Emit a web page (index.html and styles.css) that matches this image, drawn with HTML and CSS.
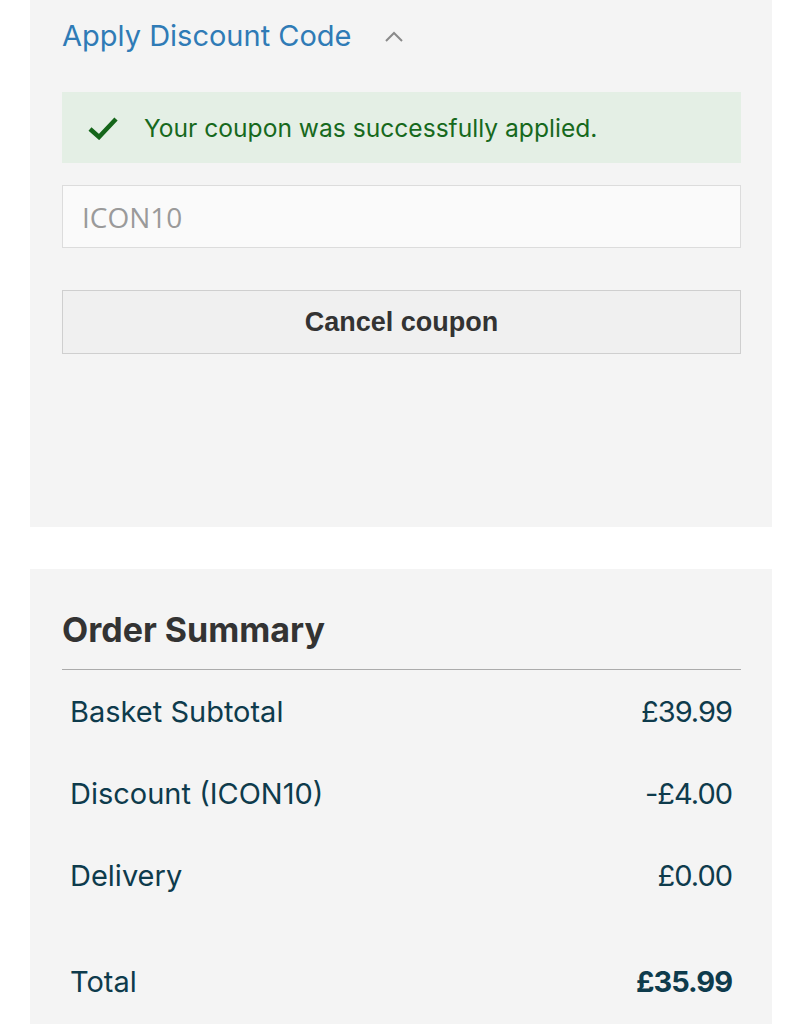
FILE: index.html
```html
<!DOCTYPE html>
<html>
<head>
<meta charset="utf-8">
<link rel="stylesheet" href="styles.css">
</head>
<body>
<div class="page">
  <section class="panel discount">
    <div class="disc-head">
      <span class="disc-title">Apply Discount Code</span>
      <svg class="chev" width="20" height="12" viewBox="0 0 20 12"><path d="M2 11 L10 3 L18 11" fill="none" stroke="#8a8a8a" stroke-width="2"/></svg>
    </div>
    <div class="success">
      <svg class="tick" width="30" height="24" viewBox="0 0 30 24"><path d="M2 13 L11 21 L28 3" fill="none" stroke="#15661a" stroke-width="4.5"/></svg>
      <span>Your coupon was successfully applied.</span>
    </div>
    <div class="code-input">ICON10</div>
    <button class="cancel">Cancel coupon</button>
  </section>
  <section class="panel summary">
    <h2 class="sum-title">Order Summary</h2>
    <div class="rows">
      <div class="row"><span>Basket Subtotal</span><span class="amt">£39.99</span></div>
      <div class="row"><span>Discount (ICON10)</span><span class="amt">-£4.00</span></div>
      <div class="row"><span>Delivery</span><span class="amt">£0.00</span></div>
      <div class="row total"><span>Total</span><span class="amt val">£35.99</span></div>
    </div>
  </section>
</div>
</body>
</html>
```

FILE: styles.css
```css
html, body { margin: 0; padding: 0; background: #fff; }
.page { width: 742px; margin-left: 30px; display: flex; flex-direction: column; gap: 42px; }
.panel { background: #f4f4f4; padding: 0 31px 0 32px; }
.discount { height: 527px; box-sizing: border-box; padding-top: 17px; }
.disc-head { display: flex; align-items: center; gap: 32px; height: 36px; }
.disc-title { font-family: "Inter", "Noto Sans", sans-serif; font-size: 29px; color: #2f7bb6; }
.chev { margin-top: 2px; }
.success { margin-top: 39px; height: 71px; background: #e4efe5; display: flex; align-items: center; padding-left: 26px; gap: 26px; font-family: "Inter", sans-serif; font-size: 24.6px; color: #17691d; }
.code-input { margin-top: 22px; height: 63px; box-sizing: border-box; background: #fafafa; border: 1px solid #dcdcdc; display: flex; align-items: center; padding-left: 19px; font-family: "Open Sans", sans-serif; font-size: 28px; color: #9a9a9a; }
.cancel { margin-top: 42px; width: 100%; height: 64px; background: #f0f0f0; border: 1px solid #cfcfcf; font-family: "Liberation Sans", "Roboto", sans-serif; font-weight: 700; font-size: 27px; color: #333; }
.summary { padding-top: 40px; min-height: 460px; }
.sum-title { margin: 0; font-family: "Inter", sans-serif; font-weight: 700; font-size: 34px; color: #333; padding-bottom: 19px; border-bottom: 1.5px solid #ababab; }
.rows { padding: 0 9px 0 8px; }
.row { display: flex; justify-content: space-between; align-items: center; height: 82px; font-family: "Inter", sans-serif; font-size: 29px; color: #0e3b4c; }
.row:first-child { height: 82px; }
.row .amt { letter-spacing: -1px; }
.row.total { height: 130px; padding-top: 0; box-sizing: border-box; }
.row .val { font-weight: 700; }
```
